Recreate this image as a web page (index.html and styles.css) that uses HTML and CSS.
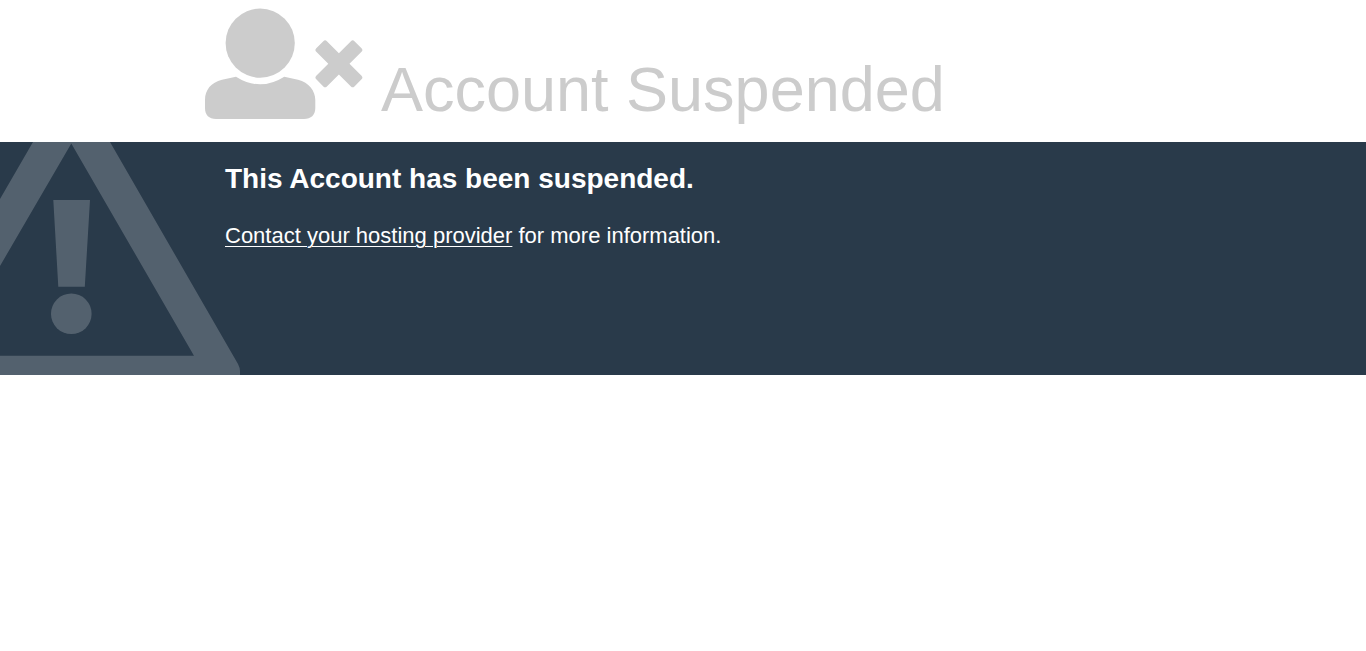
FILE: index.html
```html
<!DOCTYPE html>
<html lang="en">
<head>
<meta charset="utf-8">
<meta name="viewport" content="width=device-width, initial-scale=1">
<title>Account Suspended</title>
<link rel="stylesheet" href="styles.css">
</head>
<body>
<header class="status">
  <svg class="status-icon" viewBox="0 0 158 112" aria-hidden="true">
    <circle cx="55.2" cy="35.1" r="34.6"/>
    <path d="M31 68.7Q55 84 79.3 68.7L93 71.8C104 74.5 110.3 83 110.3 92V100C110.3 107 106 111 99 111H11C4 111 0 107 0 100V92C0 82 6 74.5 17 71.8Z"/>
    <path transform="translate(133.9 55.8) rotate(45)" d="M-7.5 -24.500Q-7.500 -27 -5 -27H5Q7.500 -27 7.500 -24.500V-7.500H24.500Q27 -7.500 27 -5V5Q27 7.500 24.500 7.500H7.500V24.500Q7.500 27 5 27H-5Q-7.500 27 -7.500 24.500V7.500H-24.500Q-27 7.500 -27 5V-5Q-27 -7.500 -24.500 -7.500H-7.500Z"/>
  </svg>
  <h1 class="status-title">Account Suspended</h1>
</header>
<main class="notice">
  <svg class="notice-icon" viewBox="0 0 240 233" aria-hidden="true">
    <path fill-rule="evenodd" d="M33 0H110L238 222Q240 226 240 229V233H0V213.7H194L71.3 1.5L0 124V57ZM53.3 58H90L84.8 144.8H58.3Z"/>
    <circle cx="71.3" cy="171.8" r="20.3"/>
  </svg>
  <h2 class="notice-title">This Account has been suspended.</h2>
  <p class="notice-text"><a class="notice-link" href="#contact">Contact your hosting provider</a> for more information.</p>
</main>
</body>
</html>
```
FILE: styles.css
```css
body {
  margin: 0;
  background: #fff;
  font-family: "Liberation Sans", Arial, sans-serif;
}
.status {
  display: flex;
  align-items: flex-end;
  gap: 18px;
  padding: 8px 15% 16px;
  color: #ccc;
}
.status-icon {
  flex: none;
  width: 158px;
  height: 112px;
  margin-bottom: 6px;
  fill: currentColor;
}
.status-title {
  margin: 0;
  font-size: 63px;
  line-height: 74px;
  font-weight: 400;
}
.notice {
  position: relative;
  min-height: 213px;
  padding: 20px 225px 0;
  background: #293a4a;
  color: #fff;
}
.notice-icon {
  position: absolute;
  left: 0;
  bottom: 0;
  width: 240px;
  height: 233px;
  fill: #fff;
  fill-opacity: 0.2;
}
.notice-title {
  margin: 0 0 24px;
  font-size: 28px;
  line-height: 34px;
}
.notice-text {
  margin: 0;
  font-size: 22px;
  line-height: 32px;
}
.notice-link {
  color: inherit;
  text-decoration: underline;
  text-decoration-thickness: 1px;
  text-underline-offset: 3px;
}
```
